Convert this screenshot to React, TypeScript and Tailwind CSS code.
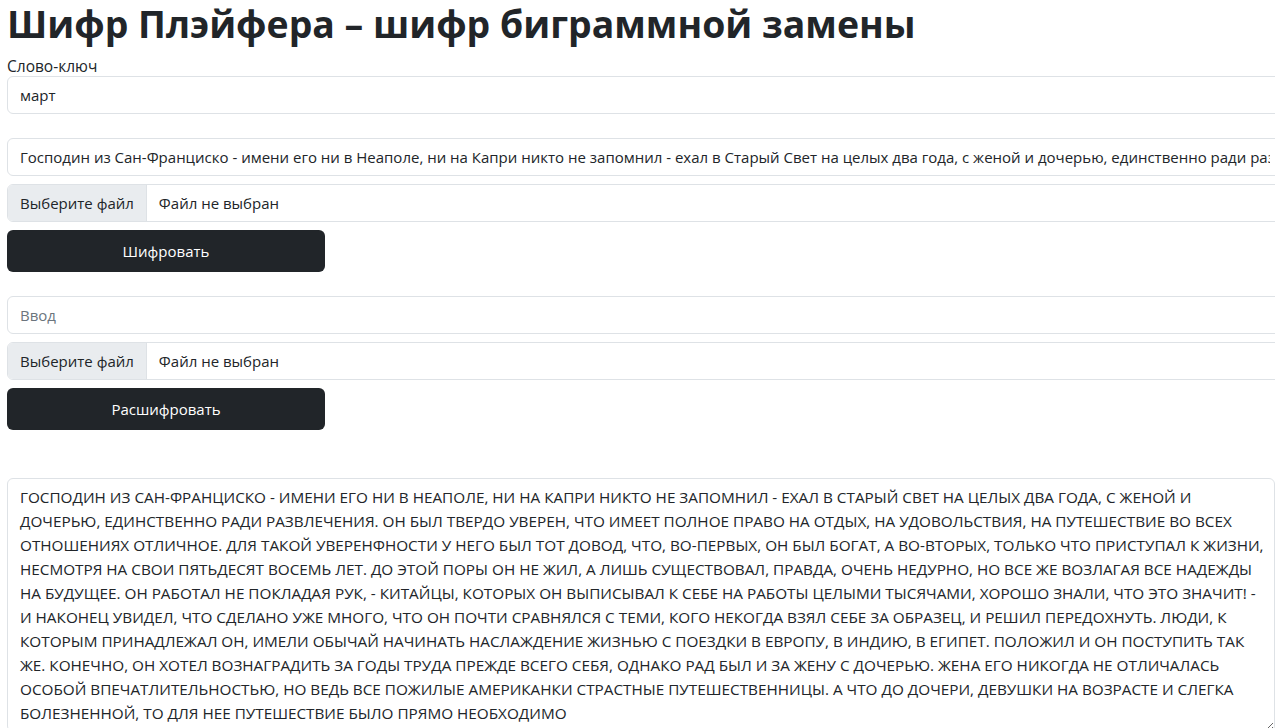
import { useState } from "react"

const plain =
  "Господин из Сан-Франциско - имени его ни в Неаполе, ни на Капри никто не запомнил - ехал в Старый Свет на целых два года, с женой и дочерью, единственно ради развлечения. Он был твердо уверен, что имеет полное право на отдых, на удовольствия, на путешествие во всех отношениях отличное."

const lines = [
  "ГОСПОДИН ИЗ САН-ФРАНЦИСКО - ИМЕНИ ЕГО НИ В НЕАПОЛЕ, НИ НА КАПРИ НИКТО НЕ ЗАПОМНИЛ - ЕХАЛ В СТАРЫЙ СВЕТ НА ЦЕЛЫХ ДВА ГОДА, С ЖЕНОЙ И",
  "ДОЧЕРЬЮ, ЕДИНСТВЕННО РАДИ РАЗВЛЕЧЕНИЯ. ОН БЫЛ ТВЕРДО УВЕРЕН, ЧТО ИМЕЕТ ПОЛНОЕ ПРАВО НА ОТДЫХ, НА УДОВОЛЬСТВИЯ, НА ПУТЕШЕСТВИЕ ВО ВСЕХ",
  "ОТНОШЕНИЯХ ОТЛИЧНОЕ. ДЛЯ ТАКОЙ УВЕРЕНФНОСТИ У НЕГО БЫЛ ТОТ ДОВОД, ЧТО, ВО-ПЕРВЫХ, ОН БЫЛ БОГАТ, А ВО-ВТОРЫХ, ТОЛЬКО ЧТО ПРИСТУПАЛ К ЖИЗНИ,",
  "НЕСМОТРЯ НА СВОИ ПЯТЬДЕСЯТ ВОСЕМЬ ЛЕТ. ДО ЭТОЙ ПОРЫ ОН НЕ ЖИЛ, А ЛИШЬ СУЩЕСТВОВАЛ, ПРАВДА, ОЧЕНЬ НЕДУРНО, НО ВСЕ ЖЕ ВОЗЛАГАЯ ВСЕ НАДЕЖДЫ",
  "НА БУДУЩЕЕ. ОН РАБОТАЛ НЕ ПОКЛАДАЯ РУК, - КИТАЙЦЫ, КОТОРЫХ ОН ВЫПИСЫВАЛ К СЕБЕ НА РАБОТЫ ЦЕЛЫМИ ТЫСЯЧАМИ, ХОРОШО ЗНАЛИ, ЧТО ЭТО ЗНАЧИТ! -",
  "И НАКОНЕЦ УВИДЕЛ, ЧТО СДЕЛАНО УЖЕ МНОГО, ЧТО ОН ПОЧТИ СРАВНЯЛСЯ С ТЕМИ, КОГО НЕКОГДА ВЗЯЛ СЕБЕ ЗА ОБРАЗЕЦ, И РЕШИЛ ПЕРЕДОХНУТЬ. ЛЮДИ, К",
  "КОТОРЫМ ПРИНАДЛЕЖАЛ ОН, ИМЕЛИ ОБЫЧАЙ НАЧИНАТЬ НАСЛАЖДЕНИЕ ЖИЗНЬЮ С ПОЕЗДКИ В ЕВРОПУ, В ИНДИЮ, В ЕГИПЕТ. ПОЛОЖИЛ И ОН ПОСТУПИТЬ ТАК",
  "ЖЕ. КОНЕЧНО, ОН ХОТЕЛ ВОЗНАГРАДИТЬ ЗА ГОДЫ ТРУДА ПРЕЖДЕ ВСЕГО СЕБЯ, ОДНАКО РАД БЫЛ И ЗА ЖЕНУ С ДОЧЕРЬЮ. ЖЕНА ЕГО НИКОГДА НЕ ОТЛИЧАЛАСЬ",
  "ОСОБОЙ ВПЕЧАТЛИТЕЛЬНОСТЬЮ, НО ВЕДЬ ВСЕ ПОЖИЛЫЕ АМЕРИКАНКИ СТРАСТНЫЕ ПУТЕШЕСТВЕННИЦЫ. А ЧТО ДО ДОЧЕРИ, ДЕВУШКИ НА ВОЗРАСТЕ И СЛЕГКА",
  "БОЛЕЗНЕННОЙ, ТО ДЛЯ НЕЕ ПУТЕШЕСТВИЕ БЫЛО ПРЯМО НЕОБХОДИМО",
]

function FilePicker() {
  return (
    <div className="flex h-[38px] w-full overflow-hidden rounded-l-md border border-[#dee2e6] bg-white">
      <span className="flex items-center border-r border-[#dee2e6] bg-[#e9ecef] px-3 text-[#212529]">Выберите файл</span>
      <span className="flex items-center px-3 text-[#212529]">Файл не выбран</span>
    </div>
  )
}

export default function App() {
  const [key, setKey] = useState("март")
  const [text, setText] = useState(plain)
  const [cipher, setCipher] = useState("")

  return (
    <div className="h-[728px] w-[1275px] overflow-hidden bg-white font-['Open_Sans',sans-serif] text-[15px] text-[#212529]">
      <div className="w-[1290px] px-[7px]">
        <h1 className="mb-2 text-[37.4px] font-bold leading-[48px]">Шифр Плэйфера – шифр биграммной замены</h1>
        <label className="block h-5 text-[15.5px] leading-5">Слово-ключ</label>
        <input
          value={key}
          onChange={(e) => setKey(e.target.value)}
          className="block h-[38px] w-full rounded-md border border-[#dee2e6] px-3 outline-none"
        />
        <input
          value={text}
          onChange={(e) => setText(e.target.value)}
          className="mt-6 block h-[38px] w-full rounded-md border border-[#dee2e6] px-3 outline-none"
        />
        <div className="mt-2">
          <FilePicker />
        </div>
        <button className="mt-2 block h-[42px] w-[318px] rounded-md bg-[#212529] text-white">Шифровать</button>

        <input
          value={cipher}
          onChange={(e) => setCipher(e.target.value)}
          placeholder="Ввод"
          className="mt-6 block h-[38px] w-full rounded-md border border-[#dee2e6] px-3 outline-none placeholder:text-[#6c757d]"
        />
        <div className="mt-2">
          <FilePicker />
        </div>
        <button className="mt-2 block h-[42px] w-[318px] rounded-md bg-[#212529] text-white">Расшифровать</button>

        <textarea
          readOnly
          rows={10}
          wrap="off"
          value={lines.join("\n")}
          className="mt-12 block w-[1268px] resize-y overflow-hidden rounded-md border border-[#dee2e6] px-3 py-1.5 text-[15.3px] leading-6 outline-none"
        />
      </div>
    </div>
  )
}
